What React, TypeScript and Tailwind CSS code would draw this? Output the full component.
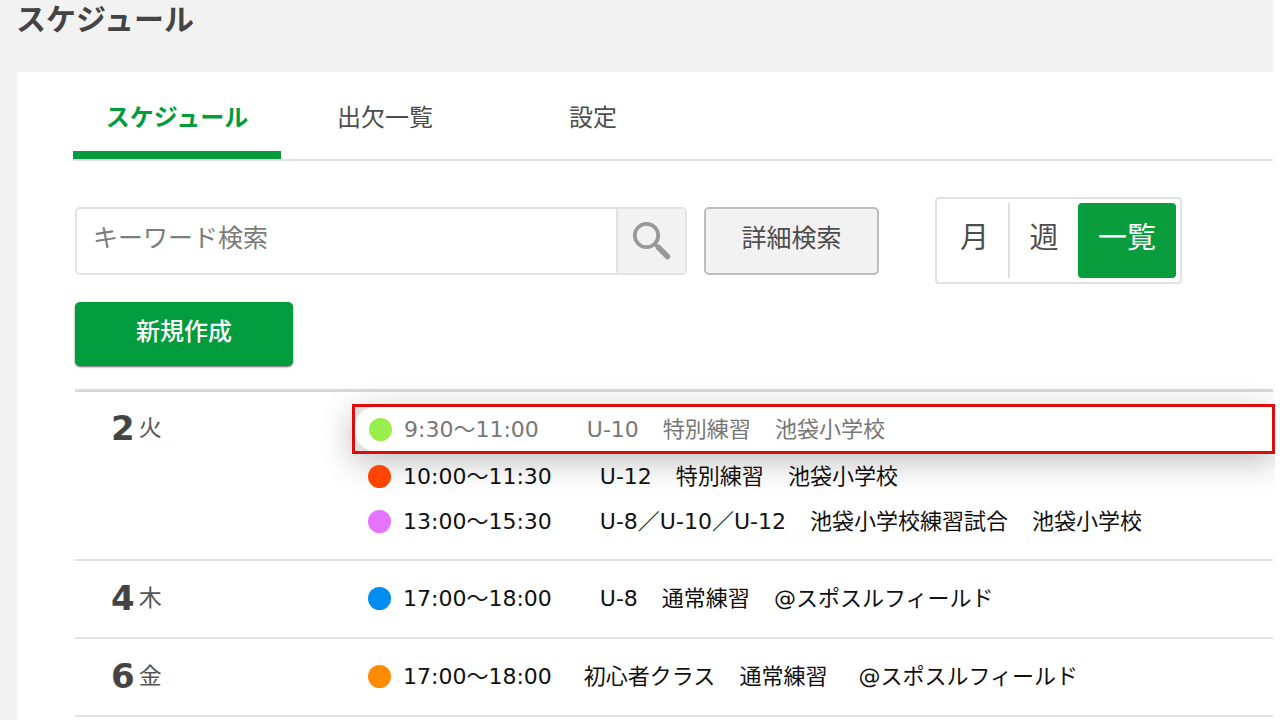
import React from "react";

type Entry = {
  time: string;
  labels: string[];
  dot: string;
  compact?: boolean;
  highlighted?: boolean;
};

type Day = { date: number; weekday: string; entries: Entry[] };

const days: Day[] = [
  {
    date: 2,
    weekday: "火",
    entries: [
      { time: "9:30～11:00", labels: ["U-10", "特別練習", "池袋小学校"], dot: "bg-[#98ee4c]", highlighted: true },
      { time: "10:00～11:30", labels: ["U-12", "特別練習", "池袋小学校"], dot: "bg-[#ff4500]" },
      { time: "13:00～15:30", labels: ["U-8／U-10／U-12", "池袋小学校練習試合", "池袋小学校"], dot: "bg-[#e673ff]" },
    ],
  },
  {
    date: 4,
    weekday: "木",
    entries: [{ time: "17:00～18:00", labels: ["U-8", "通常練習", "@スポスルフィールド"], dot: "bg-[#008cf0]" }],
  },
  {
    date: 6,
    weekday: "金",
    entries: [
      {
        time: "17:00～18:00",
        labels: ["初心者クラス", "通常練習", " @スポスルフィールド"],
        dot: "bg-[#ff8c00]",
        compact: true,
      },
    ],
  },
];

function EntryContent({ entry }: { entry: Entry }) {
  return (
    <>
      <span className={`size-[23px] shrink-0 rounded-full ${entry.dot}`} />
      <span className={`ml-3 ${entry.compact ? "mr-8" : "mr-12"}`}>{entry.time}</span>
      <span className="flex gap-6 whitespace-pre">
        {entry.labels.map((label) => (
          <span key={label}>{label}</span>
        ))}
      </span>
    </>
  );
}

function EntryRow({ entry }: { entry: Entry }) {
  if (entry.highlighted) {
    return (
      <li className="-mr-0.5 -ml-4 border-[3px] border-[#dc0d0d] bg-[#e2e2e2] shadow-[0_8px_32px_rgba(0,0,0,0.25)] [clip-path:inset(-40px_0_-60px_-60px)]">
        <a href="#entry" className="flex h-11 items-center rounded-l-[20px] bg-white pl-[14px] text-[#777]">
          <EntryContent entry={entry} />
        </a>
      </li>
    );
  }
  return (
    <li className="relative">
      <a href="#entry" className="flex h-[45px] items-center text-[#111]">
        <EntryContent entry={entry} />
      </a>
    </li>
  );
}

function Tab({ label, active }: { label: string; active?: boolean }) {
  return (
    <a
      href="#tab"
      aria-current={active ? "page" : undefined}
      className={`flex h-[87px] w-52 items-center justify-center border-b-8 pt-3 text-2xl ${
        active ? "border-[#009c3d] font-bold text-[#009c3d]" : "border-transparent text-[#4d4d4d]"
      }`}
    >
      {label}
    </a>
  );
}

export default function App() {
  return (
    <div className="min-h-screen overflow-hidden bg-white pr-[7px] font-['DejaVu_Sans','Noto_Sans_CJK_JP',sans-serif]">
      <div className="flex min-h-screen flex-col bg-[#f2f2f2]">
        <h1 className="h-[72px] pl-4 text-[30px] leading-10 font-bold text-[#444]">スケジュール</h1>
        <main className="ml-[17px] flex-1 bg-white pl-14">
          <nav className="flex border-b-2 border-[#e2e2e2]">
            <Tab label="スケジュール" active />
            <Tab label="出欠一覧" />
            <Tab label="設定" />
          </nav>

          <div className="pl-0.5">
            <div className="mt-9 flex items-center">
              <form className="flex h-[68px] w-[612px] rounded-[5px] border-2 border-[#e2e2e2]" role="search">
                <input
                  type="text"
                  aria-label="キーワード検索"
                  placeholder="キーワード検索"
                  className="min-w-0 flex-1 rounded-l px-4 pb-1 text-[25px] text-[#444] outline-none placeholder:text-[#7c7c7c]"
                />
                <button
                  type="button"
                  aria-label="検索"
                  className="flex w-[69px] items-center justify-center border-l-2 border-[#e2e2e2] bg-[#f2f2f2]"
                >
                  <svg width="38" height="38" viewBox="0 0 38 38" fill="none" stroke="#999" aria-hidden="true">
                    <circle cx="13.5" cy="13.5" r="11.7" strokeWidth="3.8" />
                    <path d="M22 22l3 3" strokeWidth="3.6" />
                    <path d="M25.5 25.5l9 9" strokeWidth="5.6" strokeLinecap="round" />
                  </svg>
                </button>
              </form>
              <button
                type="button"
                className="ml-[17px] h-[68px] w-[175px] rounded-[5px] border-2 border-[#bdbdbd] bg-[#f2f2f2] pb-1 text-[25px] text-[#4d4d4d]"
              >
                詳細検索
              </button>
              <div className="ml-14 flex h-[87px] w-[247px] rounded border-2 border-[#e2e2e2] p-1 text-[29px] text-[#4d4d4d]">
                <button type="button" className="w-[69px] border-r-2 border-[#e0e0e0] pb-1">
                  月
                </button>
                <button type="button" className="flex-1 pb-1">
                  週
                </button>
                <button type="button" aria-pressed="true" className="w-[98px] rounded bg-[#0a9d3e] pb-1 text-white">
                  一覧
                </button>
              </div>
            </div>

            <button
              type="button"
              className="mt-[18px] block h-16 w-[218px] rounded-[5px] bg-[#009c3d] pb-1 text-2xl font-medium text-white shadow-[0_1px_2px_rgba(0,0,0,0.6)]"
            >
              新規作成
            </button>

            <ul className="mt-[23px] border-t-[3px] border-[#d9d9d9]">
              {days.map((day) => (
                <li key={day.date} className="flex border-b-2 border-[#e2e2e2] pt-[12px] pb-[15px] [&+li]:py-4 [&+li]:pt-[15px]">
                  <h2
                    className={`flex w-[293px] shrink-0 items-center gap-1 pl-9 text-[#444] ${
                      day.entries.length > 1 ? "h-12" : "h-[45px]"
                    }`}
                  >
                    <span className="text-[34px] font-bold">{day.date}</span>
                    <span className="text-[23px] font-normal text-[#555]">{day.weekday}</span>
                  </h2>
                  <ul className="min-w-0 flex-1 text-[22px]">
                    {day.entries.map((entry) => (
                      <EntryRow key={entry.labels.join()} entry={entry} />
                    ))}
                  </ul>
                </li>
              ))}
            </ul>
          </div>
        </main>
      </div>
    </div>
  );
}
